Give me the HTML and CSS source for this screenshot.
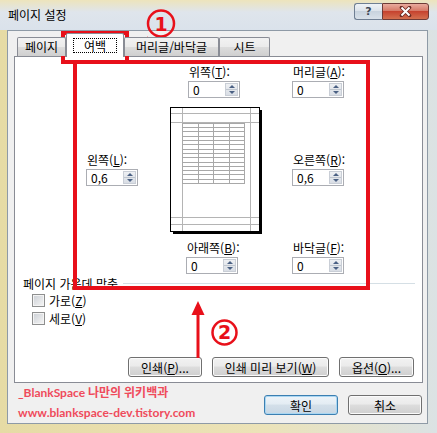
FILE: index.html
```html
<!DOCTYPE html>
<html lang="ko">
<head>
    <meta charset="UTF-8">
    <title>페이지 설정</title>
    <link rel="stylesheet" href="styles.css">
</head>
<body>
<div class="window">
    <div class="titlebar">
        <span class="title">페이지 설정</span>
        <div class="caption">
            <span class="cap-help">?</span>
            <span class="cap-close">
                <svg width="13" height="11" viewBox="0 0 13 11">
                    <path d="M2.5 1.5 L10.5 9.5 M10.5 1.5 L2.5 9.5" stroke="#6a2a22" stroke-width="3.6" stroke-linecap="round"/>
                    <path d="M2.5 1.5 L10.5 9.5 M10.5 1.5 L2.5 9.5" stroke="#fff" stroke-width="2"/>
                </svg>
            </span>
        </div>
    </div>

    <div class="client">
        <div class="tabs">
            <div class="tab t-page">페이지</div>
            <div class="tab t-margin active"><span class="focus">여백</span></div>
            <div class="tab t-header">머리글/바닥글</div>
            <div class="tab t-sheet">시트</div>
        </div>

        <div class="panel">
            <div class="margins">
                <div class="field f-top">
                    <label>위쪽(<u>T</u>):</label>
                    <div class="spin-box"><span class="val">0</span><span class="spin"><i class="up"></i><i class="down"></i></span></div>
                </div>
                <div class="field f-header">
                    <label>머리글(<u>A</u>):</label>
                    <div class="spin-box"><span class="val">0</span><span class="spin"><i class="up"></i><i class="down"></i></span></div>
                </div>
                <div class="field f-left">
                    <label>왼쪽(<u>L</u>):</label>
                    <div class="spin-box"><span class="val">0,6</span><span class="spin"><i class="up"></i><i class="down"></i></span></div>
                </div>

                <!-- 미리보기 페이지 -->
                <div class="preview">
                    <svg width="93" height="128" viewBox="0 0 93 128">
                        <rect x="3" y="125" width="89" height="2" fill="#000"/>
                        <rect x="90" y="3" width="2" height="124" fill="#000"/>
                        <rect x="0.5" y="0.5" width="89" height="124" fill="#fff" stroke="#000"/>
                        <g stroke="#b4b4b4" stroke-width="1">
                            <path d="M1 6.5 H89 M1 15.5 H89 M1 110.5 H89 M1 117.5 H89 M12.5 1 V124 M80.5 1 V124"/>
                        </g>
                        <g stroke="#a8a8a8" stroke-width="1" fill="none">
                            <rect x="12.5" y="16.5" width="62" height="60"/>
                            <path d="M28.5 16.5 V76.5 M43.5 16.5 V76.5 M59.5 16.5 V76.5"/>
                            <path d="M12.5 20.5 H74.5 M12.5 24.5 H74.5 M12.5 29.5 H74.5 M12.5 33.5 H74.5 M12.5 37.5 H74.5 M12.5 42.5 H74.5 M12.5 46.5 H74.5 M12.5 50.5 H74.5 M12.5 55.5 H74.5 M12.5 59.5 H74.5 M12.5 63.5 H74.5 M12.5 67.5 H74.5 M12.5 72.5 H74.5"/>
                        </g>
                    </svg>
                </div>

                <div class="field f-right">
                    <label>오른쪽(<u>R</u>):</label>
                    <div class="spin-box"><span class="val">0,6</span><span class="spin"><i class="up"></i><i class="down"></i></span></div>
                </div>
                <div class="field f-bottom">
                    <label>아래쪽(<u>B</u>):</label>
                    <div class="spin-box"><span class="val">0</span><span class="spin"><i class="up"></i><i class="down"></i></span></div>
                </div>
                <div class="field f-footer">
                    <label>바닥글(<u>F</u>):</label>
                    <div class="spin-box"><span class="val">0</span><span class="spin"><i class="up"></i><i class="down"></i></span></div>
                </div>
            </div>

            <div class="center-group">
                <div class="group-title">페이지 가운데 맞춤</div>
                <div class="check"><span class="box"></span>가로(<u>Z</u>)</div>
                <div class="check"><span class="box"></span>세로(<u>V</u>)</div>
            </div>

            <div class="panel-btns">
                <button class="btn b-print">인쇄(<u>P</u>)...</button>
                <button class="btn b-preview">인쇄 미리 보기(<u>W</u>)</button>
                <button class="btn b-option">옵션(<u>O</u>)...</button>
            </div>
        </div>

        <div class="footer">
            <div class="credit">
                <div>_BlankSpace 나만의 위키백과</div>
                <div>www.blankspace-dev.tistory.com</div>
            </div>
            <div class="ok-cancel">
                <button class="btn b-ok">확인</button>
                <button class="btn b-cancel">취소</button>
            </div>
        </div>
    </div>

    <!-- 빨간 표시 -->
    <svg class="annot" width="437" height="433" viewBox="0 0 437 433">
        <g fill="none" stroke="#e8101a">
            <rect x="63" y="33" width="64" height="29" stroke-width="4"/>
            <rect x="75" y="62" width="293" height="226" stroke-width="4"/>
            <circle cx="161" cy="23.5" r="13" stroke-width="2.5"/>
            <path d="M146 42.5 H176" stroke-width="3"/>
            <circle cx="224.5" cy="332.5" r="12" stroke-width="2.5"/>
            <path d="M198 358 V312" stroke-width="3"/>
        </g>
        <g fill="#e8101a">
            <polygon points="135,42.5 148,36.5 148,48.5"/>
            <polygon points="198,301 191.5,315 204.5,315"/>
            <text x="161" y="30.5" class="num">1</text>
            <text x="224.5" y="339" class="num">2</text>
        </g>
    </svg>
</div>
</body>
</html>
```

FILE: styles.css
```css
* {
    box-sizing: border-box;
}
body {
    margin: 0;
    background: #e8dda9;
    font-family: "Noto Sans CJK KR", sans-serif;
    font-size: 12px;
    color: #000;
}
u {
    text-decoration: underline;
    text-underline-offset: 1px;
}
.window {
    position: relative;
    width: 437px;
    height: 433px;
    background: linear-gradient(to right, #e6dba5, #ece3b8 60%, #dbe2e4);
}
.titlebar {
    height: 30px;
    display: flex;
    justify-content: space-between;
    padding: 0 8px;
    background: linear-gradient(#ede4bc, #dfe5ec 40%, #dae2eb);
}
.title {
    line-height: 30px;
}
.caption {
    display: flex;
    margin-top: 3px;
}
.cap-help {
    width: 28px;
    height: 17px;
    border: 1px solid #6f7f93;
    border-right: none;
    border-radius: 3px 0 0 3px;
    background: linear-gradient(#eef2f6, #dbe2ea 50%, #c8d3de 50%, #d9e1e9);
    text-align: center;
    line-height: 15px;
    font-family: "DejaVu Sans", sans-serif;
    font-size: 11px;
    font-weight: bold;
    color: #3d4756;
}
.cap-close {
    width: 47px;
    height: 17px;
    border: 1px solid #6e3b37;
    border-radius: 0 3px 3px 0;
    background: linear-gradient(#e9ab9e, #d67a68 45%, #c6432f 50%, #d4704f);
    display: flex;
    align-items: center;
    justify-content: center;
}

/* 대화상자 본문 */
.client {
    margin-left: 7px;
    width: 421px;
    height: 394px;
    background: #f0f0f0;
    border: 1px solid #8e9aa6;
    padding: 2px 4px 0 6px;
    display: flex;
    flex-direction: column;
}
.tabs {
    display: flex;
    align-items: flex-end;
    height: 23px;
    padding-left: 3px;
    position: relative;
    z-index: 1;
}
.tab {
    height: 19px;
    border: 1px solid #898c95;
    border-bottom: none;
    border-radius: 2px 2px 0 0;
    background: linear-gradient(#f2f2f2, #ebebeb 50%, #dddddd 50%, #cfcfcf);
    text-align: center;
    line-height: 17px;
}
.t-page { width: 49px; }
.t-margin { width: 58px; }
.t-header { width: 95px; }
.t-sheet { width: 51px; }
.tab.active {
    height: 24px;
    margin-bottom: -1px;
    background: #fff;
}
.focus {
    display: inline-block;
    margin-top: 4px;
    padding: 0 10px;
    border: 1px dotted #000;
    line-height: 13px;
}

.panel {
    height: 330px;
    background: #fff;
    border: 1px solid #898c95;
    display: flex;
    flex-direction: column;
}
.margins {
    display: grid;
    grid-template-columns: 84px 122px 60px;
    padding: 7px 0 0 71px;
}
.field label {
    display: block;
    line-height: 15px;
    padding-left: 1px;
}
.spin-box {
    margin-top: 2px;
    width: 52px;
    height: 17px;
    border: 1px solid #abadb3;
    background: #fff;
    display: flex;
    justify-content: space-between;
}
.val {
    padding-left: 4px;
    line-height: 15px;
}
.spin {
    width: 13px;
    margin: 1px;
    display: flex;
    flex-direction: column;
    background: linear-gradient(#eef0f3, #d9dee5);
    border: 1px solid #c9ced6;
}
.spin i {
    flex: 1;
    display: flex;
    align-items: center;
    justify-content: center;
}
.spin .up {
    border-bottom: 1px solid #bfc6cf;
}
.spin .up::after {
    content: "";
    border-left: 3px solid transparent;
    border-right: 3px solid transparent;
    border-bottom: 3px solid #4b6184;
}
.spin .down::after {
    content: "";
    border-left: 3px solid transparent;
    border-right: 3px solid transparent;
    border-top: 3px solid #4b6184;
}
.f-top { grid-column: 2; grid-row: 1; margin-left: 18px; }
.f-header { grid-column: 3; grid-row: 1; }
.f-left { grid-column: 1; grid-row: 2; align-self: center; }
.preview { grid-column: 2; grid-row: 2; margin: 9px 0 5px; height: 128px; }
.f-right { grid-column: 3; grid-row: 2; align-self: center; }
.f-bottom { grid-column: 2; grid-row: 3; margin-left: 16px; }
.f-footer { grid-column: 3; grid-row: 3; }

.center-group {
    padding: 2px 0 0 8px;
}
.group-title {
    display: flex;
    align-items: center;
    line-height: 15px;
}
.group-title::after {
    content: "";
    flex: 1;
    height: 1px;
    background: #d5dfe5;
    margin: 0 7px 0 5px;
}
.check {
    display: flex;
    align-items: center;
    height: 18px;
    margin-left: 9px;
}
.check:first-of-type {
    margin-top: 4px;
}
.box {
    width: 13px;
    height: 13px;
    margin-right: 4px;
    border: 1px solid #8e8f8f;
    background: linear-gradient(135deg, #cbcfd5, #f6f6f6);
    box-shadow: inset 0 0 0 1px #f4f4f4;
}

.btn {
    height: 20px;
    padding: 0;
    border: 1px solid #707070;
    border-radius: 3px;
    background: linear-gradient(#f2f2f2, #ebebeb 45%, #dddddd 50%, #cfcfcf);
    box-shadow: inset 0 0 0 1px #fbfbfb;
    font: inherit;
    line-height: 17px;
    color: #000;
    text-align: center;
}
.panel-btns {
    margin-top: auto;
    margin-bottom: 5px;
    padding-right: 8px;
    display: flex;
    justify-content: flex-end;
    gap: 10px;
}
.b-print { width: 74px; }
.b-preview { width: 117px; }
.b-option { width: 75px; }

.footer {
    display: flex;
    justify-content: space-between;
    padding: 0 1px 0 4px;
}
.credit {
    font-family: Lato, "Noto Sans CJK KR", sans-serif;
    font-weight: bold;
    font-size: 12px;
    line-height: 20px;
    color: #ef4b5b;
}
.ok-cancel {
    display: flex;
    gap: 10px;
    margin-top: 12px;
}
.b-ok, .b-cancel {
    width: 74px;
}
.b-ok {
    border-color: #3c7fb1;
    background: linear-gradient(#eef4f9, #e3ecf3 45%, #d3dfe9 50%, #c8d7e4);
    box-shadow: inset 0 0 0 1px #a9d6f2;
}

.annot {
    position: absolute;
    top: 0;
    left: 0;
    pointer-events: none;
}
.num {
    font-family: "DejaVu Sans", sans-serif;
    font-size: 19px;
    font-weight: bold;
    text-anchor: middle;
}
```
